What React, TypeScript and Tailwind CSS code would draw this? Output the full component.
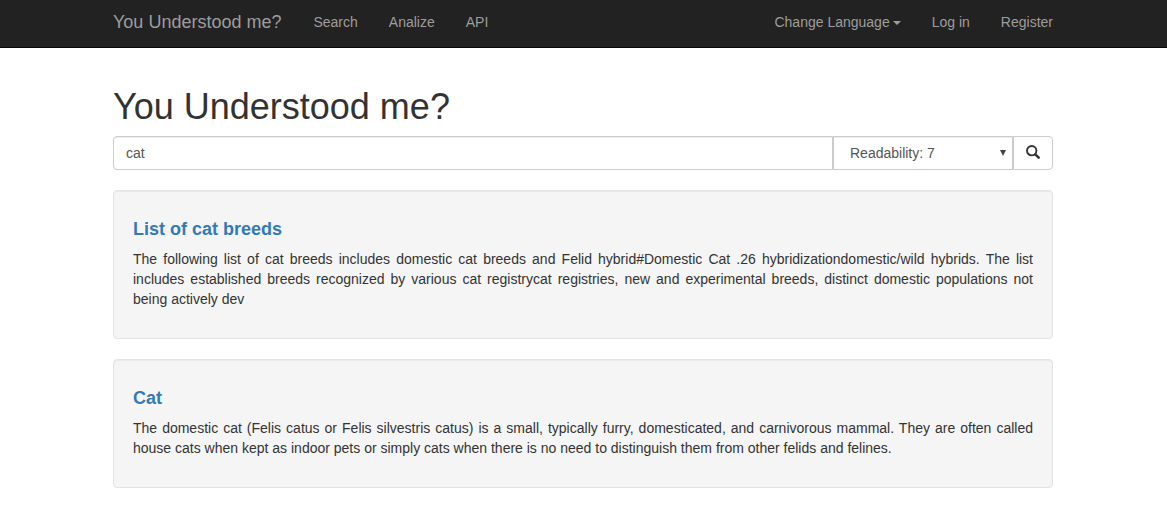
import { useState } from "react";

const links = ["Search", "Analize", "API"];

const results = [
  {
    title: "List of cat breeds",
    text: "The following list of cat breeds includes domestic cat breeds and Felid hybrid#Domestic Cat .26 hybridizationdomestic/wild hybrids. The list includes established breeds recognized by various cat registrycat registries, new and experimental breeds, distinct domestic populations not being actively dev",
  },
  {
    title: "Cat",
    text: "The domestic cat (Felis catus or Felis silvestris catus) is a small, typically furry, domesticated, and carnivorous mammal. They are often called house cats when kept as indoor pets or simply cats when there is no need to distinguish them from other felids and felines.",
  },
];

function Navbar() {
  const item = "block px-[15px] text-[#9d9d9d] hover:text-white";
  return (
    <nav className="h-12 border-b border-[#080808] bg-[#222] pr-4 pl-[15px] leading-5">
      <div className="mx-auto flex max-w-[940px] items-start justify-between pt-3">
        <div className="flex gap-px">
          <a href="#" className="pr-4 text-lg leading-5 text-[#9d9d9d] hover:text-white">
            You Understood me?
          </a>
          {links.map((label) => (
            <a key={label} href="#" className={item}>
              {label}
            </a>
          ))}
        </div>
        <div className="-mr-[15px] flex gap-px">
          <button type="button" className="flex items-center gap-[3px] px-[15px] text-[#9d9d9d] hover:text-white">
            Change Language
            <span className="mt-px border-x-4 border-t-4 border-x-transparent" />
          </button>
          <a href="#" className={item}>
            Log in
          </a>
          <a href="#" className={item}>
            Register
          </a>
        </div>
      </div>
    </nav>
  );
}

function SearchForm() {
  const [query, setQuery] = useState("cat");
  const [level, setLevel] = useState("7");
  return (
    <form className="flex h-[34px]" onSubmit={(e) => e.preventDefault()}>
      <input
        type="text"
        aria-label="Search text"
        value={query}
        onChange={(e) => setQuery(e.target.value)}
        className="min-w-0 flex-1 rounded-l border border-[#ccc] bg-white px-3 text-[#555] shadow-[inset_0_1px_1px_rgba(0,0,0,0.075)]"
      />
      <div className="relative w-[180px]">
        <select
          aria-label="Readability"
          value={level}
          onChange={(e) => setLevel(e.target.value)}
          className="h-full w-full appearance-none border border-[#ccc] bg-white px-4 text-[#555] shadow-[inset_0_1px_1px_rgba(0,0,0,0.075)]"
        >
          {["1", "2", "3", "4", "5", "6", "7", "8", "9", "10"].map((n) => (
            <option key={n} value={n}>
              Readability: {n}
            </option>
          ))}
        </select>
        <svg viewBox="0 0 6 6" className="pointer-events-none absolute top-[14px] right-[7px] h-[6px] w-[6px] fill-[#444]">
          <path d="M0 0h6L3 6z" />
        </svg>
      </div>
      <button
        type="submit"
        aria-label="Search"
        className="flex w-10 items-start justify-center rounded-r border border-[#ccc] bg-white pt-2 text-[#333]"
      >
        <svg viewBox="0 0 14 14" className="h-[14px] w-[14px]" fill="none" stroke="currentColor">
          <circle cx="5.7" cy="5.7" r="4.7" strokeWidth="1.9" />
          <path d="M9.3 9.3l3.4 3.4" strokeWidth="2.4" strokeLinecap="round" />
        </svg>
      </button>
    </form>
  );
}

export default function App() {
  return (
    <div className="bg-white font-['Liberation_Sans',Arial,sans-serif] text-sm leading-5 text-[#333]">
      <Navbar />
      <main className="pt-[39px] pr-4 pb-5 pl-[15px]">
        <div className="mx-auto max-w-[940px]">
          <h1 className="mb-[9px] text-4xl leading-10 font-normal">You Understood me?</h1>
          <SearchForm />
          {results.map((result) => (
            <article
              key={result.title}
              className="mt-5 rounded border border-[#e3e3e3] bg-[#f5f5f5] px-[19px] pt-[28px] pb-[29px] shadow-[inset_0_1px_1px_rgba(0,0,0,0.05)]"
            >
              <h2 className="mb-[10px] text-lg leading-5 font-bold text-[#337ab7]">
                <a href="#">{result.title}</a>
              </h2>
              <p className="text-justify">{result.text}</p>
            </article>
          ))}
        </div>
      </main>
    </div>
  );
}
